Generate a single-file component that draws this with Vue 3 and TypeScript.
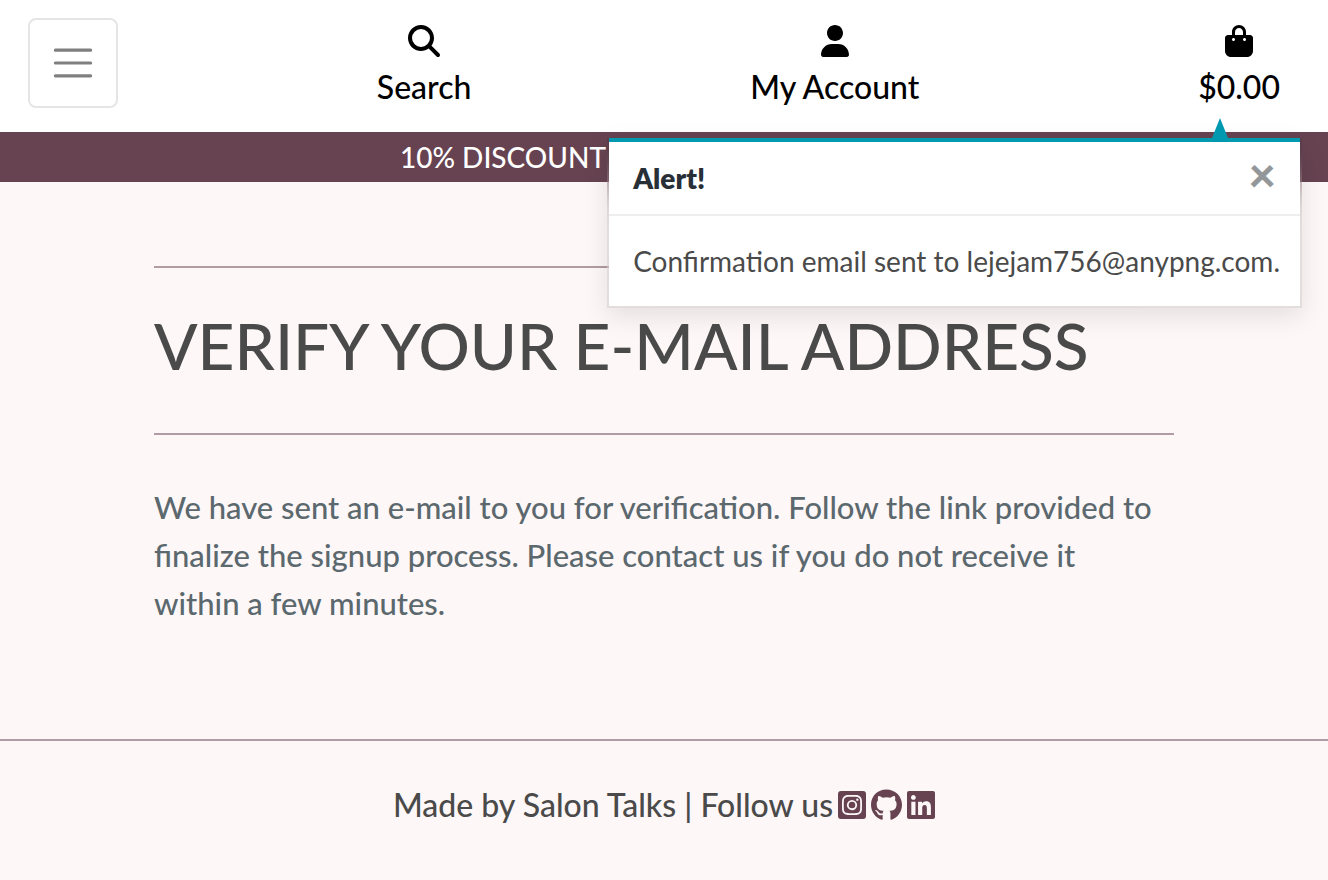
<script setup lang="ts">
import { ref } from 'vue'

interface Icon {
  label: string
  viewBox: string
  path: string
}

const navItems: Icon[] = [
  {
    label: 'Search',
    viewBox: '0 0 512 512',
    path: 'M416 208c0 45.9-14.9 88.3-40 122.7L502.6 457.4c12.5 12.5 12.5 32.8 0 45.3s-32.8 12.5-45.3 0L330.7 376c-34.4 25.2-76.8 40-122.7 40C93.1 416 0 322.9 0 208S93.1 0 208 0S416 93.1 416 208zM208 352a144 144 0 1 0 0-288 144 144 0 1 0 0 288z',
  },
  {
    label: 'My Account',
    viewBox: '0 0 448 512',
    path: 'M224 256c70.7 0 128-57.31 128-128s-57.3-128-128-128C153.3 0 96 57.31 96 128S153.3 256 224 256zM274.7 304H173.3C77.61 304 0 381.6 0 477.3c0 19.14 15.52 34.67 34.66 34.67h378.7C432.5 512 448 496.5 448 477.3C448 381.6 370.4 304 274.7 304z',
  },
  {
    label: '$0.00',
    viewBox: '0 0 448 512',
    path: 'M112 112C112 50.14 162.1 0 224 0C285.9 0 336 50.14 336 112V160H400C426.5 160 448 181.5 448 208V416C448 469 405 512 352 512H96C42.98 512 0 469 0 416V208C0 181.5 21.49 160 48 160H112V112zM160 160H288V112C288 76.65 259.3 48 224 48C188.7 48 160 76.65 160 112V160zM136 256C149.3 256 160 245.3 160 232C160 218.7 149.3 208 136 208C122.7 208 112 218.7 112 232C112 245.3 122.7 256 136 256zM312 208C298.7 208 288 218.7 288 232C288 245.3 298.7 256 312 256C325.3 256 336 245.3 336 232C336 218.7 325.3 208 312 208z',
  },
]

const socials: Icon[] = [
  {
    label: 'Instagram',
    viewBox: '0 0 448 512',
    path: 'M224 202.66A53.34 53.34 0 1 0 277.36 256 53.38 53.38 0 0 0 224 202.66Zm124.71-41a54 54 0 0 0-30.41-30.41c-21-8.29-71-6.43-94.3-6.43s-73.25-1.93-94.31 6.43a54 54 0 0 0-30.41 30.41c-8.28 21-6.43 71.05-6.43 94.33S91 329.26 99.32 350.33a54 54 0 0 0 30.41 30.41c21 8.29 71 6.43 94.31 6.43s73.24 1.93 94.3-6.43a54 54 0 0 0 30.41-30.41c8.35-21 6.43-71.05 6.43-94.33S357.1 182.74 348.75 161.67ZM224 338a82 82 0 1 1 82-82A81.9 81.9 0 0 1 224 338Zm85.38-148.3a19.14 19.14 0 1 1 19.13-19.14A19.1 19.1 0 0 1 309.42 189.74ZM400 32H48A48 48 0 0 0 0 80V432a48 48 0 0 0 48 48H400a48 48 0 0 0 48-48V80A48 48 0 0 0 400 32ZM382.88 322c-1.29 25.63-7.14 48.34-25.85 67s-41.4 24.63-67 25.85c-26.41 1.49-105.59 1.49-132 0-25.63-1.29-48.26-7.15-67-25.85s-24.63-41.42-25.85-67c-1.49-26.42-1.49-105.61 0-132 1.29-25.63 7.07-48.34 25.85-67s41.47-24.56 67-25.78c26.41-1.49 105.59-1.49 132 0 25.63 1.29 48.33 7.15 67 25.85s24.63 41.42 25.85 67.05C384.37 216.44 384.37 295.56 382.88 322Z',
  },
  {
    label: 'GitHub',
    viewBox: '0 0 496 512',
    path: 'M165.9 397.4c0 2-2.3 3.6-5.2 3.6-3.3.3-5.6-1.3-5.6-3.6 0-2 2.3-3.6 5.2-3.6 3-.3 5.6 1.3 5.6 3.6zm-31.1-4.5c-.7 2 1.3 4.3 4.3 4.9 2.6 1 5.6 0 6.2-2s-1.3-4.3-4.3-5.2c-2.6-.7-5.5.3-6.2 2.3zm44.2-1.7c-2.9.7-4.9 2.6-4.6 4.9.3 2 2.9 3.3 5.9 2.6 2.9-.7 4.9-2.6 4.6-4.6-.3-1.9-3-3.2-5.9-2.9zM244.8 8C106.1 8 0 113.3 0 252c0 110.9 69.8 205.8 169.5 239.2 12.8 2.3 17.3-5.6 17.3-12.1 0-6.2-.3-40.4-.3-61.4 0 0-70 15-84.7-29.8 0 0-11.4-29.1-27.8-36.6 0 0-22.9-15.7 1.6-15.4 0 0 24.9 2 38.6 25.8 21.9 38.6 58.6 27.5 72.9 20.9 2.3-16 8.8-27.1 16-33.7-55.9-6.2-112.3-14.3-112.3-110.5 0-27.5 7.6-41.3 23.6-58.9-2.6-6.5-11.1-33.3 2.6-67.9 20.9-6.5 69 27 69 27 20-5.6 41.5-8.5 62.8-8.5s42.8 2.9 62.8 8.5c0 0 48.1-33.6 69-27 13.7 34.7 5.2 61.4 2.6 67.9 16 17.7 25.8 31.5 25.8 58.9 0 96.5-58.9 104.2-114.8 110.5 9.2 7.9 17 22.9 17 46.4 0 33.7-.3 75.4-.3 83.6 0 6.5 4.6 14.4 17.3 12.1C428.2 457.8 496 362.9 496 252 496 113.3 383.5 8 244.8 8z',
  },
  {
    label: 'LinkedIn',
    viewBox: '0 0 448 512',
    path: 'M416 32H31.9C14.3 32 0 46.5 0 64.3v383.4C0 465.5 14.3 480 31.9 480H416c17.6 0 32-14.5 32-32.3V64.3c0-17.8-14.4-32.3-32-32.3zM135.4 416H69V202.2h66.5V416zm-33.2-243c-21.3 0-38.5-17.3-38.5-38.5S80.9 96 102.2 96c21.2 0 38.5 17.3 38.5 38.5 0 21.3-17.2 38.5-38.5 38.5zm282.1 243h-66.4V312c0-24.8-.5-56.7-34.5-56.7-34.6 0-39.9 27-39.9 54.9V416h-66.4V202.2h63.7v29.2h.9c8.9-16.8 30.6-34.5 62.2-34.5 66.5 0 78.9 43.8 78.9 100.9V416z',
  },
]

const toastOpen = ref(true)
</script>

<template>
  <div class="page">
    <header class="topbar">
      <button class="toggler" type="button" aria-label="Toggle navigation">
        <svg viewBox="0 0 30 30" aria-hidden="true">
          <path d="M4 7h22M4 15h22M4 23h22" />
        </svg>
      </button>
      <a v-for="item in navItems" :key="item.label" class="nav-link" href="#">
        <svg class="icon" :viewBox="item.viewBox" aria-hidden="true"><path :d="item.path" /></svg>
        <span>{{ item.label }}</span>
      </a>

      <div v-if="toastOpen" class="toast" role="alert">
        <div class="arrow"></div>
        <div class="toast-head">
          <strong>Alert!</strong>
          <button class="close" type="button" aria-label="Close" @click="toastOpen = false">×</button>
        </div>
        <div class="toast-body">Confirmation email sent to lejejam756@anypng.com.</div>
      </div>
    </header>

    <div class="banner">10% DISCOUNT</div>

    <main class="content">
      <hr />
      <h1>VERIFY YOUR E-MAIL ADDRESS</h1>
      <hr />
      <p>
        We have sent an e-mail to you for verification. Follow the link provided to finalize the
        signup process. Please contact us if you do not receive it within a few minutes.
      </p>
    </main>

    <footer class="footer">
      <span>Made by Salon Talks | Follow us</span>
      <a v-for="social in socials" :key="social.label" href="#" :aria-label="social.label">
        <svg class="icon" :viewBox="social.viewBox" aria-hidden="true"><path :d="social.path" /></svg>
      </a>
    </footer>
  </div>
</template>

<style>
body {
  margin: 0;
  background: #fdf7f7;
}
</style>

<style scoped>
.page {
  min-height: 100vh;
  box-sizing: border-box;
  background: #fdf7f7;
  color: #4a4a4a;
  font-family: Lato, "Liberation Sans", sans-serif;
  font-size: 32px;
  font-weight: 500;
  line-height: 48px;
}

.icon {
  display: block;
  height: 32px;
  fill: currentColor;
}

.topbar {
  position: relative;
  display: flex;
  justify-content: space-between;
  align-items: flex-start;
  padding: 18px 28px 14px;
  background: #fff;
}

.toggler {
  display: flex;
  align-items: center;
  justify-content: center;
  width: 90px;
  height: 90px;
  padding: 0;
  border: 2px solid rgba(0, 0, 0, 0.1);
  border-radius: 8px;
  background: transparent;
}

.toggler svg {
  width: 48px;
  height: 48px;
  fill: none;
  stroke: rgba(0, 0, 0, 0.5);
  stroke-width: 2;
  stroke-linecap: round;
}

.nav-link {
  display: flex;
  flex-direction: column;
  align-items: center;
  gap: 6px;
  padding: 7px 20px;
  color: #000;
  text-decoration: none;
}

.toast {
  position: absolute;
  z-index: 10;
  top: 138px;
  right: 26px;
  border: 2px solid rgba(0, 0, 0, 0.1);
  border-top: 0;
  background: rgba(255, 255, 255, 0.85);
  background-clip: padding-box;
  box-shadow: 0 8px 24px rgba(0, 0, 0, 0.1);
  backdrop-filter: blur(20px);
  font-size: 28px;
  line-height: 42px;
  white-space: nowrap;
}

.arrow {
  position: absolute;
  bottom: 100%;
  right: 72px;
  width: 16px;
  height: 20px;
  background: #0099af;
  clip-path: polygon(50% 0, 100% 100%, 0 100%);
}

.toast-head {
  display: flex;
  align-items: center;
  justify-content: space-between;
  height: 72px;
  padding: 0 24px;
  border-top: 4px solid #0099af;
  border-bottom: 2px solid #eeeeef;
  background: #fff;
  color: #292f36;
}

.toast-head strong {
  font-weight: 800;
}

.close {
  padding: 0 0 8px;
  border: 0;
  background: transparent;
  color: #939799;
  font: 900 48px/48px Lato, "Liberation Sans", sans-serif;
  cursor: pointer;
}

.toast-body {
  padding: 24px 20px 24px 24px;
  background: #fff;
  font-weight: 400;
}

.banner {
  padding: 0 0 0 400px;
  background: #674351;
  color: #fff;
  font-size: 28px;
  line-height: 50px;
  white-space: nowrap;
}

.content {
  box-sizing: border-box;
  max-width: 1080px;
  margin: 0 auto;
  padding: 84px 30px 112px;
}

hr {
  height: 2px;
  margin: 0;
  border: 0;
  background: #b19ba5;
}

h1 {
  margin: 39px 0 49px;
  font-size: 64px;
  font-weight: 500;
  line-height: 77px;
}

p {
  margin: 48px 0 0;
  padding-right: 16px;
  color: #5b686e;
  font-size: 31px;
}

.footer {
  display: flex;
  justify-content: center;
  align-items: center;
  gap: 5px;
  padding: 40px 0;
  border-top: 2px solid #b19ba5;
}

.footer a {
  color: #674351;
}
</style>
